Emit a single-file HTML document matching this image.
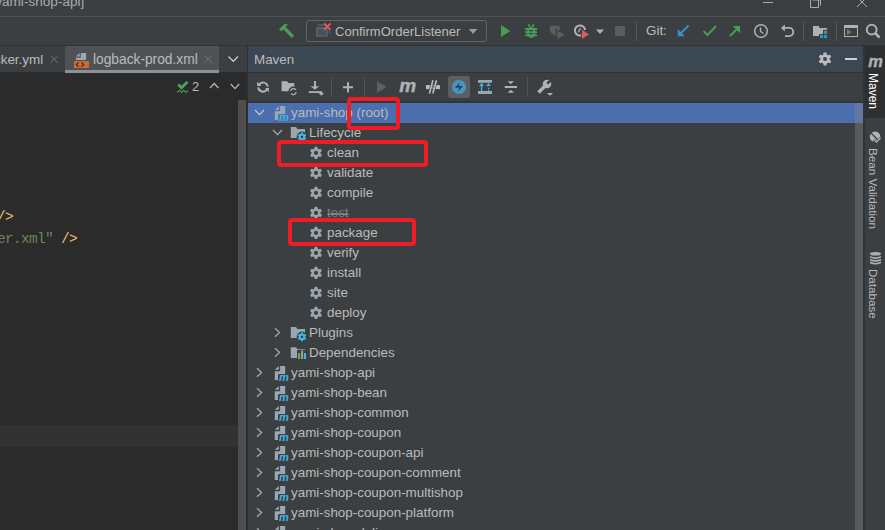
<!DOCTYPE html>
<html><head><meta charset="utf-8">
<style>
*{margin:0;padding:0;box-sizing:border-box}
html,body{width:885px;height:530px;overflow:hidden;background:#3C3F41;font-family:"Liberation Sans",sans-serif;color:#BBBBBB}
.a{position:absolute}
.t{position:absolute;white-space:nowrap;font-size:13.4px;line-height:20px}
.m{position:absolute;white-space:pre;font-family:"Liberation Mono",monospace;font-size:14.5px;letter-spacing:-0.7px;line-height:22px}
svg{position:absolute;left:0;top:0}
</style></head><body>
<div class="a" style="left:0px;top:16px;width:885px;height:1px;background:#515151;"></div>
<div class="a" style="left:0px;top:45px;width:885px;height:1px;background:#323232;"></div>
<div class="a" style="left:0px;top:72px;width:247px;height:458px;background:#2B2B2B;"></div>
<div class="a" style="left:65px;top:46px;width:154px;height:26px;background:#4E5254;"></div>
<div class="a" style="left:65px;top:70px;width:154px;height:3px;background:#8C9196;"></div>
<div class="a" style="left:0px;top:425px;width:238px;height:22px;background:#323232;"></div>
<div class="a" style="left:238px;top:100px;width:8px;height:430px;background:#4E4E4E;"></div>
<div class="a" style="left:247px;top:46px;width:1px;height:484px;background:#2E2F30;"></div>
<div class="a" style="left:248px;top:46px;width:616px;height:26px;background:#3C4754;"></div>
<div class="a" style="left:248px;top:72px;width:616px;height:1px;background:#323232;"></div>
<div class="a" style="left:248px;top:101px;width:616px;height:2px;background:#333537;"></div>
<div class="a" style="left:248px;top:103px;width:616px;height:20px;background:#4B6EAF;"></div>
<div class="a" style="left:855px;top:103px;width:8px;height:427px;background:rgba(140,140,140,0.35);"></div>
<div class="a" style="left:863px;top:46px;width:2px;height:484px;background:#313335;"></div>
<div class="a" style="left:865px;top:46px;width:20px;height:72px;background:#2D2F31;"></div>
<div class="a" style="left:448px;top:76px;width:22px;height:22px;background:#5B5F62;border-radius:3px"></div>
<div class="a" style="left:306px;top:20px;width:181px;height:22px;background:transparent;border:1px solid #646464;border-radius:3px"></div>
<div class="t" style="left:-8.6px;top:-8.3px;color:#A9AAAB;font-size:13.6px;">[yami-shop-api]</div>
<div class="t" style="left:335px;top:22px;color:#BBBBBB;font-size:13.05px;">ConfirmOrderListener</div>
<div class="t" style="left:646px;top:21px;color:#BBBBBB;font-size:13.4px;">Git:</div>
<div class="t" style="left:-6px;top:50px;color:#BBBBBB;font-size:13.4px;">cker.yml</div>
<div class="t" style="left:93px;top:50px;color:#BBBBBB;font-size:13.75px;">logback-prod.xml</div>
<div class="t" style="left:254px;top:50px;color:#BBBBBB;font-size:13.4px;">Maven</div>
<div class="t" style="left:192px;top:77px;color:#BBBBBB;font-size:13px;">2</div>
<div class="m" style="left:-3px;top:206px;color:#E8BF6A">/&gt;</div>
<div class="m" style="left:-3px;top:228px;color:#6A8759">er.xml"<span style="color:#E8BF6A"> /&gt;</span></div>
<div class="t" style="left:291px;top:102.6px;color:#BBBBBB;font-size:13.4px;">yami-shop <span style="color:#BBBBBB">(root)</span></div>
<div class="t" style="left:309px;top:122.6px;color:#BBBBBB;font-size:13.4px;">Lifecycle</div>
<div class="t" style="left:327px;top:142.6px;color:#BBBBBB;font-size:13.4px;">clean</div>
<div class="t" style="left:327px;top:162.6px;color:#BBBBBB;font-size:13.4px;">validate</div>
<div class="t" style="left:327px;top:182.6px;color:#BBBBBB;font-size:13.4px;">compile</div>
<div class="t" style="left:327px;top:202.6px;color:#BBBBBB;font-size:13.4px;"><span style="color:#787B7E">test</span></div>
<div class="t" style="left:327px;top:222.6px;color:#BBBBBB;font-size:13.4px;">package</div>
<div class="t" style="left:327px;top:242.6px;color:#BBBBBB;font-size:13.4px;">verify</div>
<div class="t" style="left:327px;top:262.6px;color:#BBBBBB;font-size:13.4px;">install</div>
<div class="t" style="left:327px;top:282.6px;color:#BBBBBB;font-size:13.4px;">site</div>
<div class="t" style="left:327px;top:302.6px;color:#BBBBBB;font-size:13.4px;">deploy</div>
<div class="t" style="left:309px;top:322.6px;color:#BBBBBB;font-size:13.4px;">Plugins</div>
<div class="t" style="left:309px;top:342.6px;color:#BBBBBB;font-size:13.4px;">Dependencies</div>
<div class="t" style="left:291px;top:362.6px;color:#BBBBBB;font-size:13.4px;">yami-shop-api</div>
<div class="t" style="left:291px;top:382.6px;color:#BBBBBB;font-size:13.4px;">yami-shop-bean</div>
<div class="t" style="left:291px;top:402.6px;color:#BBBBBB;font-size:13.4px;">yami-shop-common</div>
<div class="t" style="left:291px;top:422.6px;color:#BBBBBB;font-size:13.4px;">yami-shop-coupon</div>
<div class="t" style="left:291px;top:442.6px;color:#BBBBBB;font-size:13.4px;">yami-shop-coupon-api</div>
<div class="t" style="left:291px;top:462.6px;color:#BBBBBB;font-size:13.4px;">yami-shop-coupon-comment</div>
<div class="t" style="left:291px;top:482.6px;color:#BBBBBB;font-size:13.4px;">yami-shop-coupon-multishop</div>
<div class="t" style="left:291px;top:502.6px;color:#BBBBBB;font-size:13.4px;">yami-shop-coupon-platform</div>
<div class="t" style="left:291px;top:522.6px;color:#BBBBBB;font-size:13.4px;">yami-shop-delivery</div>
<div class="a" style="left:878px;top:73px;transform:rotate(90deg);transform-origin:0 0;white-space:nowrap;font-size:12px;line-height:10px;color:#FFFFFF">Maven</div>
<div class="a" style="left:878px;top:148px;transform:rotate(90deg);transform-origin:0 0;white-space:nowrap;font-size:11.7px;line-height:10px;color:#BBBBBB">Bean Validation</div>
<div class="a" style="left:878px;top:269px;transform:rotate(90deg);transform-origin:0 0;white-space:nowrap;font-size:11.6px;line-height:10px;color:#BBBBBB">Database</div>
<svg width="885" height="530" viewBox="0 0 885 530"><line x1="763" y1="2.5" x2="773" y2="2.5" stroke="#AAAAAA" stroke-width="1"/><path d="M810.5,0 V7.5 H818.5 V0 M812.5,0 H820.5 V5.5" fill="none" stroke="#AAAAAA" stroke-width="1"/><path d="M857,-3 L867,7 M867,-3 L857,7" stroke="#AAAAAA" stroke-width="1"/><path d="M279,29.2 L284.5,24 L288.1,24.2 L285.6,27 L294.1,35.5 L291.7,37.9 L283.5,29.4 L281.3,31.3 Z" fill="#499C54"/><rect x="317.8" y="24.2" width="7" height="1.6" fill="#5A5F62"/><rect x="329" y="30.2" width="1.2" height="3.6" fill="#5A5F62"/><rect x="316" y="27" width="11.8" height="9.8" fill="#5A5F62"/><rect x="317.7" y="29.3" width="8.4" height="5.8" fill="#3B5660"/><path d="M324.1,23.4 L330.5,29.8 M330.5,23.4 L324.1,29.8" stroke="#E05A62" stroke-width="1.9"/><path d="M468.8,28.9 H477.3 L473.05,33.9 Z" fill="#9C9C9C"/><path d="M501,25 V37 L510.5,31 Z" fill="#499C54"/><ellipse cx="531.2" cy="32.4" rx="4.2" ry="5.6" fill="#499C54"/><path d="M525.1,29 H537 M525.1,32.2 H537 M525.1,35.4 H537" stroke="#499C54" stroke-width="1.8"/><path d="M529.1,30.7 H532.9 M529.1,33.7 H532.9" stroke="#3C3F41" stroke-width="1.3"/><path d="M528.3,24.4 L530,26.8 M533.9,24.4 L532.2,26.8" stroke="#499C54" stroke-width="1.7"/><path d="M550,26.3 L555,25.2 L559.8,26.3 V30 H557.3 V36 Q552,35 550,31 Z" fill="#5C5E60"/><rect x="555.3" y="28" width="1.3" height="7" fill="#3C3F41"/><path d="M557.7,30.9 V38.7 L565,34.6 Z" fill="#5C5E60"/><path d="M581,35.5 A5.1,5.1 0 1 1 585.1,30" fill="none" stroke="#AFB1B3" stroke-width="2"/><path d="M580.6,28 L578.2,32.2" fill="none" stroke="#AFB1B3" stroke-width="1.3"/><path d="M581.9,29.8 V38.9 L589.1,34.5 Z" fill="#DB5C5C"/><path d="M596,29.6 H604 L600,34 Z" fill="#AFB1B3"/><rect x="615" y="26" width="10" height="10" fill="#5A5D60"/><line x1="636.5" y1="21" x2="636.5" y2="41" stroke="#555759" stroke-width="1"/><line x1="803.5" y1="21" x2="803.5" y2="41" stroke="#555759" stroke-width="1"/><line x1="836.5" y1="21" x2="836.5" y2="41" stroke="#555759" stroke-width="1"/><line x1="688.5" y1="25.5" x2="680.5" y2="33.5" stroke="#3592C4" stroke-width="2"/><path d="M677.8,29 V36.2 H685 Z" fill="#3592C4"/><path d="M703.5,31 L707.5,35 L716,26" fill="none" stroke="#499C54" stroke-width="2"/><line x1="730" y1="36" x2="738" y2="28" stroke="#499C54" stroke-width="2"/><path d="M732.7,25.9 H740 V33.2 Z" fill="#499C54"/><circle cx="761" cy="31" r="6.3" fill="none" stroke="#AFB1B3" stroke-width="1.5"/><path d="M760.5,27.5 V31.5 L763.5,33.5" fill="none" stroke="#AFB1B3" stroke-width="1.4"/><path d="M784,27.9 H789.2 A4.1,4.1 0 0 1 789.2,36.1 H785" fill="none" stroke="#AFB1B3" stroke-width="1.9"/><path d="M780.9,27.9 L784.9,24.4 V31.4 Z" fill="#AFB1B3"/><path d="M813,26.1 H819.1 V27.9 H827 V36.1 H813 Z" fill="#AFB1B3"/><path d="M823,29.8 H828 V39 H819 V34 H823 Z" fill="#3C3F41"/><rect x="824" y="30.8" width="3.1" height="3.1" fill="#3592C4"/><rect x="820" y="35" width="3.1" height="3.1" fill="#3592C4"/><rect x="824" y="35" width="3.1" height="3.1" fill="#3592C4"/><rect x="844.5" y="25.5" width="13" height="11" fill="none" stroke="#AFB1B3" stroke-width="1"/><rect x="844" y="25" width="14" height="3" fill="#AFB1B3"/><path d="M847,29 V35 L851.5,32 Z" fill="#499C54"/><circle cx="871.7" cy="29.6" r="4.9" fill="none" stroke="#AFB1B3" stroke-width="2"/><line x1="875" y1="33" x2="879.5" y2="37.5" stroke="#AFB1B3" stroke-width="2.5"/><path d="M50.5,55.5 L58,63 M58,55.5 L50.5,63" stroke="#6F7173" stroke-width="1"/><path d="M204.5,55.5 L212,63 M212,55.5 L204.5,63" stroke="#6F7173" stroke-width="1"/><path d="M228.5,56.5 L233.3,61.3 L238,56.5" fill="none" stroke="#C8C8C8" stroke-width="1.3"/><path d="M80.8,53 H86.1 V60 H75.9 V57.7 H80.8 Z" fill="#9AA7B0"/><path d="M75.9,56.6 L79.7,53 V56.6 Z" fill="#9AA7B0"/><rect x="74" y="61" width="15" height="7" fill="#CC6A32"/><path d="M78.5,62.5 L76.3,64.6 L78.5,66.8 M81.5,62.5 L83.7,64.6 L81.5,66.8" fill="none" stroke="#3A2A22" stroke-width="1.1"/><path d="M178.3,84.5 L181.5,87.8 L187.5,81.8" fill="none" stroke="#4FA25A" stroke-width="2.8"/><path d="M177.3,92.5 L179.5,90.2 L181.6,92.5 L183.7,90.2 L185.8,92.5 L187.8,90.3" fill="none" stroke="#4FA25A" stroke-width="1.1"/><path d="M210,88 L214.2,83.5 L218.4,88" fill="none" stroke="#B4B4B4" stroke-width="1.3"/><path d="M230.8,84 L235,88.6 L239.2,84" fill="none" stroke="#B4B4B4" stroke-width="1.3"/><polygon points="823.06,54.83 823.74,52.52 826.26,52.52 826.94,54.83 825.00,59.00" fill="#B9BBBD"/><polygon points="827.64,55.23 829.98,54.67 831.24,56.85 829.58,58.60 825.00,59.00" fill="#B9BBBD"/><polygon points="829.58,59.40 831.24,61.15 829.98,63.33 827.64,62.77 825.00,59.00" fill="#B9BBBD"/><polygon points="826.94,63.17 826.26,65.48 823.74,65.48 823.06,63.17 825.00,59.00" fill="#B9BBBD"/><polygon points="822.36,62.77 820.02,63.33 818.76,61.15 820.42,59.40 825.00,59.00" fill="#B9BBBD"/><polygon points="820.42,58.60 818.76,56.85 820.02,54.67 822.36,55.23 825.00,59.00" fill="#B9BBBD"/><circle cx="825" cy="59" r="4.6" fill="#B9BBBD"/><circle cx="825" cy="59" r="2.0" fill="#3C4754"/><rect x="845" y="58" width="12" height="2" fill="#CFCFCF"/><path d="M259.1,84.6 A4.8,4.8 0 0 1 267.8,86.6" fill="none" stroke="#AFB1B3" stroke-width="2"/><path d="M267,89.5 A4.8,4.8 0 0 1 258.2,87.4" fill="none" stroke="#AFB1B3" stroke-width="2"/><path d="M257.1,81.7 V86.1 H261.4 Z" fill="#AFB1B3"/><path d="M265,88.1 H268.9 V92.3 Z" fill="#AFB1B3"/><path d="M281.6,81.2 H287 L288.5,83 H294.3 V91.2 H281.6 Z" fill="#AFB1B3"/><circle cx="293.4" cy="91.6" r="5" fill="#3C3F41"/><path d="M290.6,91 A2.9,2.9 0 0 1 295.8,89.8 M296.2,92.2 A2.9,2.9 0 0 1 291,93.4" fill="none" stroke="#AFB1B3" stroke-width="1.3"/><line x1="315" y1="81" x2="315" y2="87" stroke="#AFB1B3" stroke-width="2"/><path d="M310.6,86.2 H319.2 L314.9,89.8 Z" fill="#AFB1B3"/><rect x="308.8" y="91.2" width="13.5" height="1.8" fill="#AFB1B3"/><path d="M318.7,93 H324.1 L321.4,95.8 Z" fill="#AFB1B3"/><line x1="331.5" y1="77" x2="331.5" y2="97" stroke="#515456" stroke-width="1"/><line x1="364.5" y1="77" x2="364.5" y2="97" stroke="#515456" stroke-width="1"/><line x1="527.5" y1="77" x2="527.5" y2="97" stroke="#515456" stroke-width="1"/><path d="M348,82.2 V92.3 M342.9,87.25 H353" stroke="#AFB1B3" stroke-width="2"/><path d="M377,81.2 V93 L386.7,87.1 Z" fill="#5E6163"/><text x="399.2" y="92.2" font-family="Liberation Sans" font-weight="bold" font-style="italic" font-size="19" fill="#AFB1B3" stroke="#AFB1B3" stroke-width="0.5">m</text><rect x="426" y="85.1" width="13.9" height="4" fill="#C0C0C0"/><path d="M429.4,93.6 L432.9,80.2 M432.8,93.6 L436.5,80.2" stroke="#3C3F41" stroke-width="2.9"/><path d="M429.4,93.6 L432.9,80.2 M432.8,93.6 L436.5,80.2" stroke="#B8B8B8" stroke-width="1.7"/><circle cx="459" cy="87" r="7.05" fill="#4596BF"/><path d="M459.8,82.4 L455,87.7 L459.3,87.5 L458,91.5 L463,86.1 L458.7,86.3 Z" fill="#2A3944"/><rect x="478" y="80" width="14" height="2.8" fill="#9AA7B0"/><rect x="478" y="91" width="14" height="3" fill="#9AA7B0"/><line x1="481.6" y1="85" x2="481.6" y2="91" stroke="#40B6E0" stroke-width="1.3"/><path d="M479,86 H484.2 L481.6,83.1 Z" fill="#40B6E0"/><path d="M486.1,86 H491 L488.5,83.1 Z" fill="#40B6E0"/><rect x="487.9" y="87.7" width="1.3" height="1.3" fill="#40B6E0"/><rect x="487.9" y="89.8" width="1.3" height="1.3" fill="#40B6E0"/><path d="M507.7,81.2 H514 L510.8,84.2 Z" fill="#AFB1B3"/><rect x="504.7" y="86" width="12.3" height="2" fill="#AFB1B3"/><path d="M507.7,92.8 H514 L510.8,89.7 Z" fill="#AFB1B3"/><line x1="538.5" y1="92.5" x2="545" y2="86" stroke="#AFB1B3" stroke-width="3.5"/><circle cx="547" cy="84" r="4.3" fill="#AFB1B3"/><path d="M548.27,84.57 L552.16,80.68 L550.32,78.84 L546.43,82.73 Z" fill="#3C3F41"/><path d="M547,93.1 H553 L550,95.8 Z" fill="#AFB1B3"/><path d="M255,110 L259.5,114.6 L264,110" fill="none" stroke="#C8CACC" stroke-width="1.2"/><path d="M274.8,109.7 L278.8,106.1 V109.7 Z" fill="#9AA7B0"/><path d="M280.1,105.9 H285.2 V114.2 H278 V120 H274.8 V111.2 H280.1 Z" fill="#9AA7B0"/><text x="278.9" y="120.6" font-family="Liberation Sans" font-weight="bold" font-style="italic" font-size="11" fill="#40B6E0" stroke="#4B6EAF" stroke-width="1.5" paint-order="stroke">m</text><path d="M273,130 L277.5,134.6 L282,130" fill="none" stroke="#ABABAB" stroke-width="1.2"/><path d="M290.8,127.1 H296.0 L297.5,129.1 H305.0 V137.9 H290.8 Z" fill="#9AA7B0"/><circle cx="302" cy="136.9" r="5.3" fill="#3C3F41"/><polygon points="300.65,134.00 301.14,132.48 302.86,132.48 303.35,134.00 302.00,136.90" fill="#40B6E0"/><polygon points="303.84,134.28 305.40,133.95 306.25,135.43 305.19,136.62 302.00,136.90" fill="#40B6E0"/><polygon points="305.19,137.18 306.25,138.37 305.40,139.85 303.84,139.52 302.00,136.90" fill="#40B6E0"/><polygon points="303.35,139.80 302.86,141.32 301.14,141.32 300.65,139.80 302.00,136.90" fill="#40B6E0"/><polygon points="300.16,139.52 298.60,139.85 297.75,138.37 298.81,137.18 302.00,136.90" fill="#40B6E0"/><polygon points="298.81,136.62 297.75,135.43 298.60,133.95 300.16,134.28 302.00,136.90" fill="#40B6E0"/><circle cx="302" cy="136.9" r="3.2" fill="#40B6E0"/><circle cx="302" cy="136.9" r="1.1" fill="#2B2B2B"/><polygon points="314.18,149.00 314.82,146.81 317.18,146.81 317.82,149.00 316.00,152.90" fill="#9AA7B0"/><polygon points="318.47,149.38 320.68,148.83 321.86,150.88 320.28,152.53 316.00,152.90" fill="#9AA7B0"/><polygon points="320.28,153.27 321.86,154.92 320.68,156.97 318.47,156.42 316.00,152.90" fill="#9AA7B0"/><polygon points="317.82,156.80 317.18,158.99 314.82,158.99 314.18,156.80 316.00,152.90" fill="#9AA7B0"/><polygon points="313.53,156.42 311.32,156.97 310.14,154.92 311.72,153.27 316.00,152.90" fill="#9AA7B0"/><polygon points="311.72,152.53 310.14,150.88 311.32,148.83 313.53,149.38 316.00,152.90" fill="#9AA7B0"/><circle cx="316" cy="152.9" r="4.3" fill="#9AA7B0"/><circle cx="316" cy="152.9" r="2.1" fill="#3C3F41"/><polygon points="314.18,169.00 314.82,166.81 317.18,166.81 317.82,169.00 316.00,172.90" fill="#9AA7B0"/><polygon points="318.47,169.38 320.68,168.83 321.86,170.88 320.28,172.53 316.00,172.90" fill="#9AA7B0"/><polygon points="320.28,173.27 321.86,174.92 320.68,176.97 318.47,176.42 316.00,172.90" fill="#9AA7B0"/><polygon points="317.82,176.80 317.18,178.99 314.82,178.99 314.18,176.80 316.00,172.90" fill="#9AA7B0"/><polygon points="313.53,176.42 311.32,176.97 310.14,174.92 311.72,173.27 316.00,172.90" fill="#9AA7B0"/><polygon points="311.72,172.53 310.14,170.88 311.32,168.83 313.53,169.38 316.00,172.90" fill="#9AA7B0"/><circle cx="316" cy="172.9" r="4.3" fill="#9AA7B0"/><circle cx="316" cy="172.9" r="2.1" fill="#3C3F41"/><polygon points="314.18,189.00 314.82,186.81 317.18,186.81 317.82,189.00 316.00,192.90" fill="#9AA7B0"/><polygon points="318.47,189.38 320.68,188.83 321.86,190.88 320.28,192.53 316.00,192.90" fill="#9AA7B0"/><polygon points="320.28,193.27 321.86,194.92 320.68,196.97 318.47,196.42 316.00,192.90" fill="#9AA7B0"/><polygon points="317.82,196.80 317.18,198.99 314.82,198.99 314.18,196.80 316.00,192.90" fill="#9AA7B0"/><polygon points="313.53,196.42 311.32,196.97 310.14,194.92 311.72,193.27 316.00,192.90" fill="#9AA7B0"/><polygon points="311.72,192.53 310.14,190.88 311.32,188.83 313.53,189.38 316.00,192.90" fill="#9AA7B0"/><circle cx="316" cy="192.9" r="4.3" fill="#9AA7B0"/><circle cx="316" cy="192.9" r="2.1" fill="#3C3F41"/><polygon points="314.18,209.00 314.82,206.81 317.18,206.81 317.82,209.00 316.00,212.90" fill="#9AA7B0"/><polygon points="318.47,209.38 320.68,208.83 321.86,210.88 320.28,212.53 316.00,212.90" fill="#9AA7B0"/><polygon points="320.28,213.27 321.86,214.92 320.68,216.97 318.47,216.42 316.00,212.90" fill="#9AA7B0"/><polygon points="317.82,216.80 317.18,218.99 314.82,218.99 314.18,216.80 316.00,212.90" fill="#9AA7B0"/><polygon points="313.53,216.42 311.32,216.97 310.14,214.92 311.72,213.27 316.00,212.90" fill="#9AA7B0"/><polygon points="311.72,212.53 310.14,210.88 311.32,208.83 313.53,209.38 316.00,212.90" fill="#9AA7B0"/><circle cx="316" cy="212.9" r="4.3" fill="#9AA7B0"/><circle cx="316" cy="212.9" r="2.1" fill="#3C3F41"/><polygon points="314.18,229.00 314.82,226.81 317.18,226.81 317.82,229.00 316.00,232.90" fill="#9AA7B0"/><polygon points="318.47,229.38 320.68,228.83 321.86,230.88 320.28,232.53 316.00,232.90" fill="#9AA7B0"/><polygon points="320.28,233.27 321.86,234.92 320.68,236.97 318.47,236.42 316.00,232.90" fill="#9AA7B0"/><polygon points="317.82,236.80 317.18,238.99 314.82,238.99 314.18,236.80 316.00,232.90" fill="#9AA7B0"/><polygon points="313.53,236.42 311.32,236.97 310.14,234.92 311.72,233.27 316.00,232.90" fill="#9AA7B0"/><polygon points="311.72,232.53 310.14,230.88 311.32,228.83 313.53,229.38 316.00,232.90" fill="#9AA7B0"/><circle cx="316" cy="232.9" r="4.3" fill="#9AA7B0"/><circle cx="316" cy="232.9" r="2.1" fill="#3C3F41"/><polygon points="314.18,249.00 314.82,246.81 317.18,246.81 317.82,249.00 316.00,252.90" fill="#9AA7B0"/><polygon points="318.47,249.38 320.68,248.83 321.86,250.88 320.28,252.53 316.00,252.90" fill="#9AA7B0"/><polygon points="320.28,253.27 321.86,254.92 320.68,256.97 318.47,256.42 316.00,252.90" fill="#9AA7B0"/><polygon points="317.82,256.80 317.18,258.99 314.82,258.99 314.18,256.80 316.00,252.90" fill="#9AA7B0"/><polygon points="313.53,256.42 311.32,256.97 310.14,254.92 311.72,253.27 316.00,252.90" fill="#9AA7B0"/><polygon points="311.72,252.53 310.14,250.88 311.32,248.83 313.53,249.38 316.00,252.90" fill="#9AA7B0"/><circle cx="316" cy="252.9" r="4.3" fill="#9AA7B0"/><circle cx="316" cy="252.9" r="2.1" fill="#3C3F41"/><polygon points="314.18,269.00 314.82,266.81 317.18,266.81 317.82,269.00 316.00,272.90" fill="#9AA7B0"/><polygon points="318.47,269.38 320.68,268.83 321.86,270.88 320.28,272.53 316.00,272.90" fill="#9AA7B0"/><polygon points="320.28,273.27 321.86,274.92 320.68,276.97 318.47,276.42 316.00,272.90" fill="#9AA7B0"/><polygon points="317.82,276.80 317.18,278.99 314.82,278.99 314.18,276.80 316.00,272.90" fill="#9AA7B0"/><polygon points="313.53,276.42 311.32,276.97 310.14,274.92 311.72,273.27 316.00,272.90" fill="#9AA7B0"/><polygon points="311.72,272.53 310.14,270.88 311.32,268.83 313.53,269.38 316.00,272.90" fill="#9AA7B0"/><circle cx="316" cy="272.9" r="4.3" fill="#9AA7B0"/><circle cx="316" cy="272.9" r="2.1" fill="#3C3F41"/><polygon points="314.18,289.00 314.82,286.81 317.18,286.81 317.82,289.00 316.00,292.90" fill="#9AA7B0"/><polygon points="318.47,289.38 320.68,288.83 321.86,290.88 320.28,292.53 316.00,292.90" fill="#9AA7B0"/><polygon points="320.28,293.27 321.86,294.92 320.68,296.97 318.47,296.42 316.00,292.90" fill="#9AA7B0"/><polygon points="317.82,296.80 317.18,298.99 314.82,298.99 314.18,296.80 316.00,292.90" fill="#9AA7B0"/><polygon points="313.53,296.42 311.32,296.97 310.14,294.92 311.72,293.27 316.00,292.90" fill="#9AA7B0"/><polygon points="311.72,292.53 310.14,290.88 311.32,288.83 313.53,289.38 316.00,292.90" fill="#9AA7B0"/><circle cx="316" cy="292.9" r="4.3" fill="#9AA7B0"/><circle cx="316" cy="292.9" r="2.1" fill="#3C3F41"/><polygon points="314.18,309.00 314.82,306.81 317.18,306.81 317.82,309.00 316.00,312.90" fill="#9AA7B0"/><polygon points="318.47,309.38 320.68,308.83 321.86,310.88 320.28,312.53 316.00,312.90" fill="#9AA7B0"/><polygon points="320.28,313.27 321.86,314.92 320.68,316.97 318.47,316.42 316.00,312.90" fill="#9AA7B0"/><polygon points="317.82,316.80 317.18,318.99 314.82,318.99 314.18,316.80 316.00,312.90" fill="#9AA7B0"/><polygon points="313.53,316.42 311.32,316.97 310.14,314.92 311.72,313.27 316.00,312.90" fill="#9AA7B0"/><polygon points="311.72,312.53 310.14,310.88 311.32,308.83 313.53,309.38 316.00,312.90" fill="#9AA7B0"/><circle cx="316" cy="312.9" r="4.3" fill="#9AA7B0"/><circle cx="316" cy="312.9" r="2.1" fill="#3C3F41"/><path d="M275,328.2 L279.6,332.5 L275,336.8" fill="none" stroke="#ABABAB" stroke-width="1.2"/><path d="M290.8,327.1 H296.0 L297.5,329.1 H305.0 V337.90000000000003 H290.8 Z" fill="#9AA7B0"/><circle cx="302" cy="336.9" r="5.3" fill="#3C3F41"/><polygon points="300.65,334.00 301.14,332.48 302.86,332.48 303.35,334.00 302.00,336.90" fill="#40B6E0"/><polygon points="303.84,334.28 305.40,333.95 306.25,335.43 305.19,336.62 302.00,336.90" fill="#40B6E0"/><polygon points="305.19,337.18 306.25,338.37 305.40,339.85 303.84,339.52 302.00,336.90" fill="#40B6E0"/><polygon points="303.35,339.80 302.86,341.32 301.14,341.32 300.65,339.80 302.00,336.90" fill="#40B6E0"/><polygon points="300.16,339.52 298.60,339.85 297.75,338.37 298.81,337.18 302.00,336.90" fill="#40B6E0"/><polygon points="298.81,336.62 297.75,335.43 298.60,333.95 300.16,334.28 302.00,336.90" fill="#40B6E0"/><circle cx="302" cy="336.9" r="3.2" fill="#40B6E0"/><circle cx="302" cy="336.9" r="1.1" fill="#2B2B2B"/><path d="M275,348.2 L279.6,352.5 L275,356.8" fill="none" stroke="#ABABAB" stroke-width="1.2"/><path d="M290.8,347.2 H296.0 L297.5,349.2 H305.0 V358.0 H290.8 Z" fill="#9AA7B0"/><rect x="297" y="350" width="10" height="10" fill="#3C3F41"/><rect x="298" y="353" width="2.1" height="6" fill="#62B543"/><rect x="301.1" y="350.6" width="2" height="8.4" fill="#9AA7B0"/><rect x="304" y="353" width="2" height="6" fill="#40B6E0"/><path d="M257,368.2 L261.6,372.5 L257,376.8" fill="none" stroke="#ABABAB" stroke-width="1.2"/><path d="M274.8,369.7 L278.8,366.1 V369.7 Z" fill="#9AA7B0"/><path d="M280.1,365.9 H285.2 V374.2 H278 V380 H274.8 V371.2 H280.1 Z" fill="#9AA7B0"/><text x="278.9" y="380.6" font-family="Liberation Sans" font-weight="bold" font-style="italic" font-size="11" fill="#40B6E0" stroke="#3C3F41" stroke-width="1.5" paint-order="stroke">m</text><path d="M257,388.2 L261.6,392.5 L257,396.8" fill="none" stroke="#ABABAB" stroke-width="1.2"/><path d="M274.8,389.7 L278.8,386.1 V389.7 Z" fill="#9AA7B0"/><path d="M280.1,385.9 H285.2 V394.2 H278 V400 H274.8 V391.2 H280.1 Z" fill="#9AA7B0"/><text x="278.9" y="400.6" font-family="Liberation Sans" font-weight="bold" font-style="italic" font-size="11" fill="#40B6E0" stroke="#3C3F41" stroke-width="1.5" paint-order="stroke">m</text><path d="M257,408.2 L261.6,412.5 L257,416.8" fill="none" stroke="#ABABAB" stroke-width="1.2"/><path d="M274.8,409.7 L278.8,406.1 V409.7 Z" fill="#9AA7B0"/><path d="M280.1,405.9 H285.2 V414.2 H278 V420 H274.8 V411.2 H280.1 Z" fill="#9AA7B0"/><text x="278.9" y="420.6" font-family="Liberation Sans" font-weight="bold" font-style="italic" font-size="11" fill="#40B6E0" stroke="#3C3F41" stroke-width="1.5" paint-order="stroke">m</text><path d="M257,428.2 L261.6,432.5 L257,436.8" fill="none" stroke="#ABABAB" stroke-width="1.2"/><path d="M274.8,429.7 L278.8,426.1 V429.7 Z" fill="#9AA7B0"/><path d="M280.1,425.9 H285.2 V434.2 H278 V440 H274.8 V431.2 H280.1 Z" fill="#9AA7B0"/><text x="278.9" y="440.6" font-family="Liberation Sans" font-weight="bold" font-style="italic" font-size="11" fill="#40B6E0" stroke="#3C3F41" stroke-width="1.5" paint-order="stroke">m</text><path d="M257,448.2 L261.6,452.5 L257,456.8" fill="none" stroke="#ABABAB" stroke-width="1.2"/><path d="M274.8,449.7 L278.8,446.1 V449.7 Z" fill="#9AA7B0"/><path d="M280.1,445.9 H285.2 V454.2 H278 V460 H274.8 V451.2 H280.1 Z" fill="#9AA7B0"/><text x="278.9" y="460.6" font-family="Liberation Sans" font-weight="bold" font-style="italic" font-size="11" fill="#40B6E0" stroke="#3C3F41" stroke-width="1.5" paint-order="stroke">m</text><path d="M257,468.2 L261.6,472.5 L257,476.8" fill="none" stroke="#ABABAB" stroke-width="1.2"/><path d="M274.8,469.7 L278.8,466.1 V469.7 Z" fill="#9AA7B0"/><path d="M280.1,465.9 H285.2 V474.2 H278 V480 H274.8 V471.2 H280.1 Z" fill="#9AA7B0"/><text x="278.9" y="480.6" font-family="Liberation Sans" font-weight="bold" font-style="italic" font-size="11" fill="#40B6E0" stroke="#3C3F41" stroke-width="1.5" paint-order="stroke">m</text><path d="M257,488.2 L261.6,492.5 L257,496.8" fill="none" stroke="#ABABAB" stroke-width="1.2"/><path d="M274.8,489.7 L278.8,486.1 V489.7 Z" fill="#9AA7B0"/><path d="M280.1,485.9 H285.2 V494.2 H278 V500 H274.8 V491.2 H280.1 Z" fill="#9AA7B0"/><text x="278.9" y="500.6" font-family="Liberation Sans" font-weight="bold" font-style="italic" font-size="11" fill="#40B6E0" stroke="#3C3F41" stroke-width="1.5" paint-order="stroke">m</text><path d="M257,508.2 L261.6,512.5 L257,516.8" fill="none" stroke="#ABABAB" stroke-width="1.2"/><path d="M274.8,509.7 L278.8,506.1 V509.7 Z" fill="#9AA7B0"/><path d="M280.1,505.9 H285.2 V514.2 H278 V520 H274.8 V511.2 H280.1 Z" fill="#9AA7B0"/><text x="278.9" y="520.6" font-family="Liberation Sans" font-weight="bold" font-style="italic" font-size="11" fill="#40B6E0" stroke="#3C3F41" stroke-width="1.5" paint-order="stroke">m</text><path d="M257,528.2 L261.6,532.5 L257,536.8000000000001" fill="none" stroke="#ABABAB" stroke-width="1.2"/><path d="M274.8,529.7 L278.8,526.1 V529.7 Z" fill="#9AA7B0"/><path d="M280.1,525.9 H285.2 V534.2 H278 V540 H274.8 V531.2 H280.1 Z" fill="#9AA7B0"/><text x="278.9" y="540.6" font-family="Liberation Sans" font-weight="bold" font-style="italic" font-size="11" fill="#40B6E0" stroke="#3C3F41" stroke-width="1.5" paint-order="stroke">m</text><rect x="327.5" y="213.6" width="21" height="1.1" fill="#9A9C9E"/><rect x="349" y="99" width="49" height="29" rx="2" fill="none" stroke="#EE1D25" stroke-width="4"/><rect x="279" y="142" width="147" height="23" rx="2" fill="none" stroke="#EE1D25" stroke-width="4"/><rect x="290" y="220" width="124" height="24" rx="2" fill="none" stroke="#EE1D25" stroke-width="4"/><text x="868.3" y="66.5" font-family="Liberation Sans" font-weight="bold" font-style="italic" font-size="16.5" fill="#AFB1B3" stroke="#AFB1B3" stroke-width="0.4">m</text><circle cx="875.1" cy="136.8" r="5.3" fill="#AFB1B3"/><line x1="871" y1="133" x2="878" y2="140" stroke="#3C3F41" stroke-width="1.3"/><path d="M874,140 L876.5,142.5 L881,138" fill="none" stroke="#3C3F41" stroke-width="3"/><path d="M874.5,140 L876.5,142 L880.5,138" fill="none" stroke="#AFB1B3" stroke-width="1.3"/><ellipse cx="875.5" cy="253.8" rx="5.5" ry="1.8" fill="#AFB1B3"/><path d="M870,256 Q875.5,258.6 881,256 V257.6 Q875.5,260.2 870,257.6 Z" fill="#AFB1B3"/><path d="M870,258.8 Q875.5,261.40000000000003 881,258.8 V260.40000000000003 Q875.5,263.0 870,260.40000000000003 Z" fill="#AFB1B3"/><path d="M870,261.6 Q875.5,264.20000000000005 881,261.6 V263.20000000000005 Q875.5,265.8 870,263.20000000000005 Z" fill="#AFB1B3"/></svg>
</body></html>
